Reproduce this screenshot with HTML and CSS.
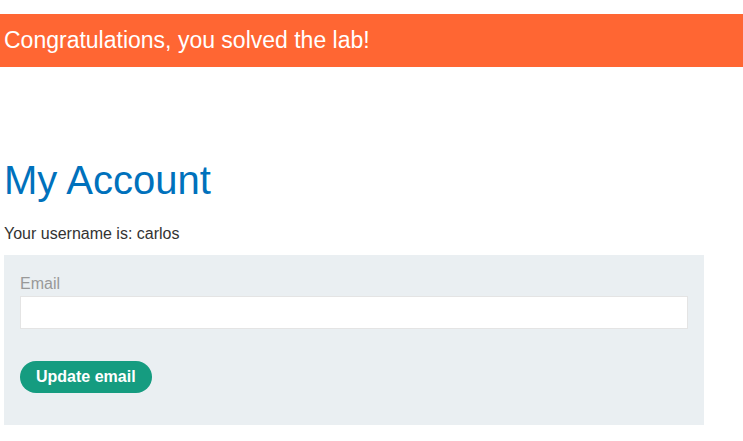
FILE: index.html
```html
<!DOCTYPE html>
<html lang="en">
<head>
<meta charset="utf-8">
<title>My Account</title>
<link rel="stylesheet" href="styles.css">
</head>
<body>
<section class="banner"><p class="banner-text">Congratulations, you solved the lab!</p></section>
<main class="account">
<h1 class="title">My Account</h1>
<p class="username">Your username is: carlos</p>
<form class="email-form">
<label class="label" for="email">Email</label>
<input class="field" id="email" type="email" name="email">
<button class="button" type="submit">Update email</button>
</form>
</main>
</body>
</html>
```
FILE: styles.css
```css
* {
  box-sizing: border-box;
}

body {
  margin: 0;
  padding-top: 14px;
  background: #fff;
  color: #333332;
  font: 16px/24px "Liberation Sans", Arial, sans-serif;
}

.banner {
  padding: 10px 4px 11px;
  background: #ff6633;
  color: #fff;
}

.banner-text {
  margin: 0;
  font-size: 23px;
  line-height: 32px;
}

.account {
  padding: 88px 39px 16px 4px;
}

.title {
  margin: 0;
  color: #0071bc;
  font-size: 40px;
  font-weight: 400;
  line-height: 50px;
}

.username {
  margin: 17px 0 9px;
}

.email-form {
  max-width: 700px;
  padding: 17px 16px 32px;
  background: #eaeff2;
}

.label {
  display: block;
  color: #999;
}

.field {
  display: block;
  width: 100%;
  height: 33px;
  margin: 0 0 32px;
  padding: 4px 8px;
  border: 1px solid #e4e4e4;
  background: #fff;
  font: inherit;
}

.button {
  display: block;
  height: 32px;
  padding: 0 16px;
  border: 0;
  border-radius: 16px;
  background: #159c80;
  color: #fff;
  font: inherit;
  font-weight: 700;
}
```
